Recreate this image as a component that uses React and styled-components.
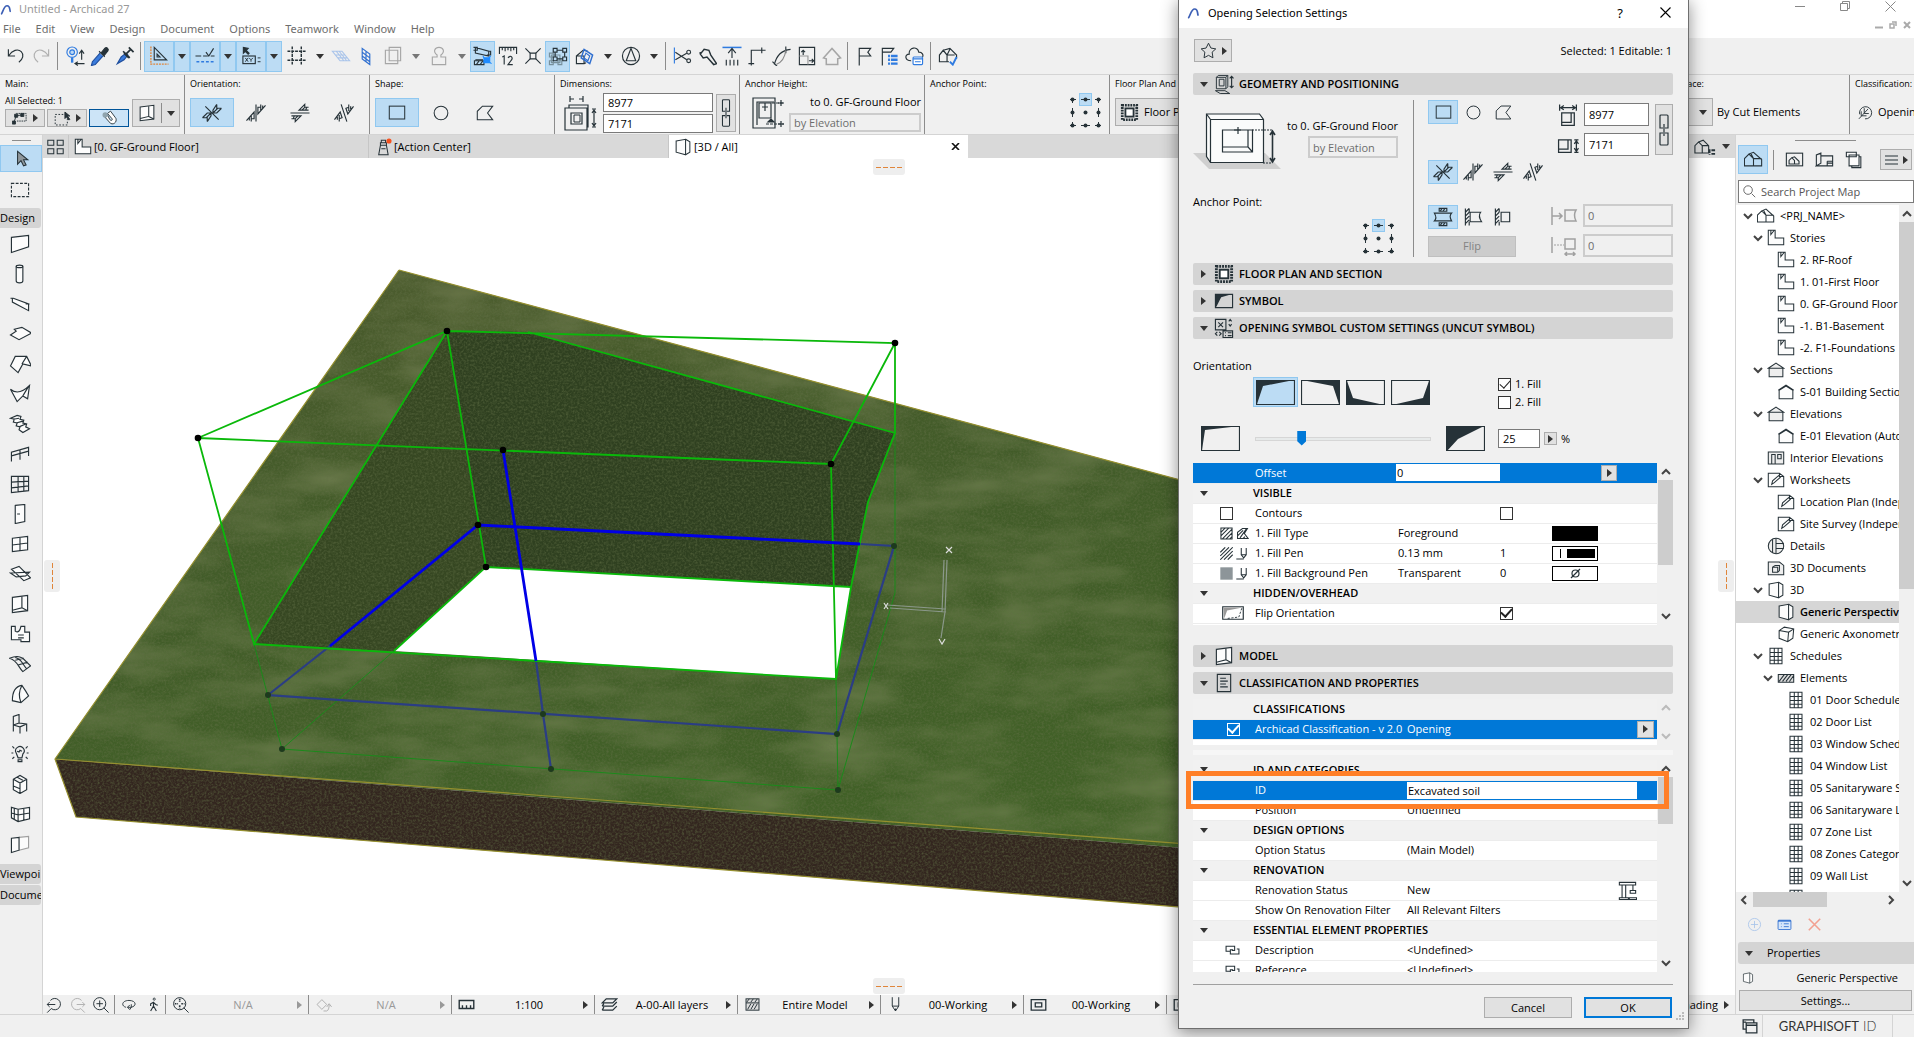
import React from 'react'
import styled, { createGlobalStyle, css } from 'styled-components'

const INK = '#263238'

const GlobalStyle = createGlobalStyle`
  * { box-sizing: border-box; }
  body {
    margin: 0;
    font-family: "Open Sans", "Noto Sans", sans-serif;
    font-size: 11px;
    line-height: 16px;
    color: #000;
    overflow: hidden;
  }
  button, input {
    font: inherit;
    color: inherit;
    margin: 0;
    padding: 0;
    border: 0;
    border-radius: 0;
    background: none;
    outline: 0;
  }
  button { white-space: nowrap; }
`

/* ---------- icons ---------- */

const Svg = styled.svg`
  display: block;
  flex: none;
  fill: none;
  stroke: ${p => p.$color || INK};
  stroke-width: 1.2;
`

const ICONS = {
  logo: <path d="M2 17C5 12 6 4 11 4s4 6 5 9" stroke="#3c5fb5" strokeWidth="2.6" strokeLinecap="round" />,
  undo: <path d="M2 3v7h7M2.500 9.500C6 4 12 2 15.500 5.500c3 3 2 8-2.500 11" />,
  redo: <path d="M18 3v7h-7M17.500 9.500C14 4 8 2 4.500 5.500c-3 3-2 8 2.500 11" />,
  find: <><circle cx="7" cy="6" r="5.500" stroke="#2f7be0" /><circle cx="7" cy="6" r="2.500" fill="#bcd8f4" stroke="#2f7be0" /><path d="M7 12v5" stroke="#2f7be0" strokeWidth="2.500" /><path d="M17 14V5m-2.500 2.500L17 4l2.500 3.500M20 18h-9m2-2-3 2 3 2" /></>,
  picker: <><path d="M10 7 2 16l-1 4 4-1 8-9" fill="#3a7bdc" stroke="#1f4f9e" /><path d="m9 5 6 6M11 7l4-5c2-2 5 1 3 3l-4 5z" fill={INK} /></>,
  syringe: <><path d="m2 18 4-7 5-4 2 2-4 5z" fill="#3a7bdc" stroke="#1f4f9e" /><path d="m8 5 7 7M11 8l5-5m-2-2 5 5M9 7l5 5" strokeWidth="1.800" /></>,
  setsquare: <><path d="M5 1v13h13zM8 8v3h3z" /><path d="M1.500 0v18.500H20" stroke="#e0853a" strokeWidth="1.400" strokeDasharray="2 1" /></>,
  snap: <><path d="M0 10h6m2 0h5" /><path d="m11 6 3 4 5-8M16 10h4" /><path d="M1 16h18" stroke="#2f7be0" strokeWidth="1.500" strokeDasharray="3 2" /></>,
  tracker: <><path d="M2 1v6l2-2 3 3 1-1-3-3 2-2z" fill={INK} /><rect x="1.500" y="10" width="13" height="8" /><path d="m4 12 3 4m0-4-3 4m4-4 2 2v2m2-4-2 2M17 12h3m-3 4h3" strokeWidth="1" /></>,
  grid: <path d="M5 0v20M14.500 0v20M0 5h20M0 14.500h20" strokeDasharray="3 1" strokeWidth="1.500" />,
  planeH: <path d="M1 5h10l8 10H9zM4 9h10M7 12h10M5 5l8 10M8 5l8 10" stroke="#a9c4ea" />,
  planeV: <path d="m6 2 8 6v11l-8-6zM10 5v11M6 6l8 6M6 10l8 6" stroke="#2f6fd0" />,
  trace: <path d="M6 1h12v14H6zM15 15v3H2V4h4M6 4h9v11" stroke="#a6a6a6" />,
  stamp: <path d="M8 9C3 5 6 1 10 1s7 4 2 8v2h5v8H3v-8h5z" stroke="#a6a6a6" />,
  suspend: <><path d="M2 1v6l14 3V5zM0 1h4v3H0M14 5h4v4h-4M2 14h8" /><path d="M1 15h10v4H1zM3 19l3-4m1 4 3-4" /><path d="M11 12h6v5h-6z" fill="#1f8bff" stroke="#1f8bff" /><path d="m18 10-2 2m3 6-3-2m-6-6 1 2" stroke="#1f8bff" /></>,
  ruler: <path d="M1 8V1h18v7M4 1v3m3-3v4m3-4v3m3-3v4m3-4v3M4 11l2-1v9M10 12c3-4 6 0 3 3l-3 4h5" />,
  cross: <><path d="m2 2 5 5m6 6 5 5m0-16-5 5m-6 6-5 5" /><path d="m7 7h6v6H7z" /></>,
  groups: <><path d="M3 9h9v8H3zM1 15h4v4H1zM1 7h4v4H1zM10 15h4v4h-4z" stroke="#78909c" /><path d="M7 4h10v9H7z" /><path d="M5 2h4v4H5zM15 2h4v4h-4zM15 11h4v4h-4zM5 11h4v4H5z" fill="#bcdcf4" /></>,
  cutaway: <><path d="M1 10 8 4l5 1M1 10v8h8v-8zM9 18l2-1" /><path d="m9 3 9 6-3 9-9-6z" stroke="#2f6fd0" strokeWidth="1.500" /><path d="m11 7 4 3-2 5-4-3z" stroke="#2f6fd0" /></>,
  explore: <><circle cx="10" cy="10" r="9" /><path d="m10 2 5 13H5z" /></>,
  scissors: <><path d="M2 1v17" stroke="#2f7be0" /><path d="m3 6 12 8M3 14l12-7" /><circle cx="17" cy="6" r="2" /><circle cx="17" cy="15" r="2" /></>,
  axe: <path d="m3 8 4-5 5 1 2 5 6 9-3 1-7-8-4 1zM5 6l-3 1" strokeWidth="1.500" />,
  adjust: <><path d="M0 1h20" stroke="#2f7be0" strokeWidth="1.600" /><path d="M10 12V3m-4 4 4-5 4 5M4 20v-6m4 6v-6m4 6v-6m4 6v-6" /></>,
  corner: <path d="M4 20V4h15M1 18h6M15 1v6" />,
  arc: <><path d="M2 19C4 10 9 4 19 3M14 0v7M0 16l5 5" /><path d="M4 19C9 17 13 12 14 4" stroke="#888" /></>,
  resize: <><path d="M2 1h16v18H2z" /><path d="M2 10h9v9" stroke="#999" /><path d="M6 9V4M4 6l2-2 2 2M12 15h5m-2-2 2 2-2 2" /></>,
  house: <path d="M1 12 10 2l9 10-3 1v6H4v-6z" stroke="#a6a6a6" strokeWidth="1.600" />,
  flag: <path d="M5 20V2h12l-3 4 3 4H5" />,
  flagList: <><path d="M3 20V2h12l-3 4H3" /><path d="M9 10h10M9 14h10M9 18h10" stroke="#2f7be0" strokeWidth="2.600" strokeDasharray="2 1 9 1" /></>,
  cloud: <><path d="M7 15c-7 0-7-7-2-7C4 1 14-1 15 6c4 0 5 3 4 5" /><rect x="9" y="11" width="10" height="8" rx="1" stroke="#2f7be0" fill="#fff" /><path d="M9 13h10M11 16h6" stroke="#2f7be0" /></>,
  houseCheck: <><path d="M1 9v7h8V9L5 4zM5 4l7-2 7 7v4M9 9l3-6M9 9h8M9 16h2" /><path d="m12 16 3 3 4-8" stroke="#2f7be0" strokeWidth="2" /></>,
  // info box
  nodes: <><path d="M2 16 5 7l8-1" /><path d="M5 4h13v10H6" strokeDasharray="2 1" /><path d="M0 14h4v4H0zM3 5h4v4H3zM11 4h4v4h-4z" fill={INK} /></>,
  marqueeArrow: <><path d="M1 5h15v13H1z" strokeDasharray="2 2" /><path d="M13 2v8l2-2 3 4 1-1-3-4h3z" fill={INK} /></>,
  magnet: <><path d="m3 7 9 10c5 3 10-4 6-8L12 1l-4 3 6 7c1 2-1 3-3 1L7 4z" fill="#fff" /><circle cx="5" cy="6" r="3.500" fill="#90a4ae" stroke="none" /></>,
  opening: <><path d="M2 3 18 1v16L2 19z" fill="#fcfcfc" /><path d="M12 2v12L2 16.500M12 14l6 3" /></>,
  ori1: <path d="m3 3 14 14M0 15l5-5h4v3l-4 6M0 15h4l5-5M5 19v-5M20 5l-5 5h-4V7l4-6M20 5h-4l-5 5M15 1v5" />,
  ori2: <path d="M10 1v18M0 18l8-9v7h-3v3M3 15v3m2-5v3M20 2l-8 9V4h3V1M17 5V2m-2 5V4" />,
  ori3: <path d="M0 10h20M1 13h10l-6 6v-3H1M4 13l-1 3m5-3-3 3M19 7H9l6-6v3h4M16 7l1-3m-5 3 3-3" />,
  ori4: <path d="m7 1 6 18M0 17l6-8 2 6-3 1v3M3 14v3m2-5v4M20 3l-6 8-2-6 3-1V1M17 6V3m-2 5V4" />,
  rect: <rect x="1" y="2" width="18" height="15" />,
  circle: <circle cx="10" cy="10" r="8" />,
  poly: <path d="M1 18V8l6-6h12l-6 8 6 8z" />,
  dims: <><path d="M1 13h22v22H1zM5 13v-3h19v22h-1M7 18h11v11H7z" /><path d="M10 20h6v7h-6z" strokeWidth="1" /><path d="M6 1v6m13-6v6M6 4h4m5 0h4M28 14h4m-4 18h4M30 16v14m-2-12 2-3 2 3m-4 10 2 3 2-3" /></>,
  chain: <path d="M5 15H2V3q0-1 1-1h6q1 0 1 1v12H7M6 11v12M5 20H2v11q0 1 1 1h6q1 0 1-1V20H7" />,
  anchorH: <><path d="M1 1h22v30H1zM5 28V5h17" /><path d="M7 6h12v15H7zM13 6v8m-3-4h6" /><path d="M20 6h12M14 27h18" strokeDasharray="3 1" /><path d="m16 25 3-3 3 3z" fill={INK} /><path d="M29 3v6m-3-3h6M29 24v6m-3-3h6" /></>,
  frame: <><path d="M2 2h16v16H2z" stroke={INK} strokeWidth="3" strokeDasharray="2 1" /><rect x="5.500" y="5.500" width="9" height="9" strokeWidth="2" fill="#fff" /></>,
  class: <path d="M10 19a8 8 0 1 0-7-6M2 19 14 6M9 5v7h6M5 9v6h7" />,
  // tool box
  arrow: <path d="M6 1v15l4-4 3 6 3-1-3-6h5z" fill="#90979b" />,
  marquee: <path d="M1 3h18v14H1z" strokeDasharray="3 1.500" />,
  wall: <path d="M1 3 19 1v12L1 19z" fill="#fcfcfc" />,
  column: <><path d="M6 2v15c0 3 7 3 7 0V2" fill="#fcfcfc" /><ellipse cx="9.500" cy="2" rx="3.500" ry="1.300" /></>,
  beam: <path d="M0 4h3l16 6v7L2 8V4m14 6h4" fill="#fcfcfc" />,
  slab: <path d="m0 11 6-4-2-2 8-2 10 6-13 7z" fill="#fcfcfc" />,
  roof: <path d="M0 12 5 2h12l5 10-9-2-5 9zM17 2l-5 8" fill="#fcfcfc" />,
  shell: <path d="M0 5c7 6 14 2 20-4l-2 14-5-3-6 6zM19 2l-6 10" fill="#fcfcfc" />,
  stair: <path d="m0 4 7-3 4 1-1 3 4 1-1 3 4 1-1 3 4 2-7 4-4-3 1-3-4-1 1-3-4-1 1-3zM3 5l6-1M6 9l7-2M9 13l7-3" fill="#fcfcfc" />,
  railing: <path d="M1 18V8l18-5v9M10 5v11M1 12l18-5" />,
  curtain: <path d="M1 2h18v15L1 19zM8 2v17M14 2v16M1 8l18-1M1 14l18-2" />,
  door: <path d="M5 1 15 0v18l-10 2zM7 10h3" fill="#fcfcfc" />,
  window: <path d="M2 4 18 2v14L2 18zM10 3v14M2 11l16-2" fill="#fcfcfc" />,
  skylight: <path d="m1 5 8-3 12 12-7 3zM0 9l20-1-4 4-10 1z" fill="#fcfcfc" />,
  zone: <path d="M1 2h4v5c3 2 5 0 6-5h4v6h5v10H11v-2H1zM8 11h6m-6 3h6" fill="#fcfcfc" />,
  mesh: <path d="M-1 4c7-3 10-2 14 0l8 8-8 6C8 13 7 6-1 4zM5 6l9-2M8 11l10-3M5 3c7 2 6 5 12 12" />,
  morph: <path d="M2 17C2 8 5 2 12 1l4 6 3 5-8 7zM12 1C8 8 9 14 11 19" fill="#fcfcfc" />,
  chair: <path d="M3 18V2l6-2v9l8 1v8M3 11l7 2v7M10 13l7-3M3 11l6-2" />,
  lamp: <path d="M6 9a4.500 4.500 0 1 1 7 1l-1 4H8zM8 16h4v2H8zM7 7l2 1 1-2 2 1M1 9h2m14 0h2M2 2l2 2m14-2-2 2M2 15l2-2m14 2-2-2" />,
  object: <path d="m3 5 7-4 7 4v11l-7 4-7-4zM3 5l7 4 7-4M10 9v11M3 12l7 3M7 3l6 3" fill="#fcfcfc" />,
  cwall: <path d="M1 3 8 5l12-2v12L8 18l-7-4zM8 5v13M14 4v13M1 9l7 2 12-2M4 4v12" fill="#fcfcfc" />,
  panel: <><path d="M9 3 19 2v12L9 16.500" fill="#fcfcfc" stroke="#a0a0a0" /><path d="M1 4 9 3v13.500L1 19z" fill="#fcfcfc" /></>,
  // tabs and navigator
  tabs: <path d="M1 2h7v6H1zM12 2h7v6h-7zM1 12h7v6H1zM12 12h7v6h-7z" />,
  story: <path d="M1 1h8v9h10v8H1zM4 1v5l4-5" fill="#fcfcfc" />,
  lighthouse: <><path d="M7 8h7l2 11H5zM7 5h7v3H7zM8 5V2h5v3M8 12h5" /><circle cx="17" cy="3" r="3" fill="#f4511e" stroke="none" /></>,
  persp: <path d="M2 3 13 1v18L2 16zM13 1l5 3v12l-5 3" fill="#fcfcfc" />,
  axo: <path d="m2 6 6-4 11 2-1 11-6 4-10-4zM2 6l11 2-1 11M13 8l6-4" fill="#fcfcfc" />,
  project: <path d="M0 9v8h10V9L5 4zM5 4l5-2 9 8v7h-9M10 9h9M10 9 7 3" />,
  viewmap: <><rect x="1" y="3" width="18" height="14" /><path d="M4 11v4h6v-4L7 8zM7 8l3-1 5 5v3h-5" /></>,
  layout: <path d="M1 17V5l5-2v11l-5 3h18V6H6M13 12h6m-6 5v-5m0 2h6" />,
  publisher: <path d="M4 5h11v12H4zM1 2h11v5H1zM15 7h2v12H7v-2" fill="#fcfcfc" />,
  section: <path d="M2 8h16v10H2zM1 8l9-6 9 6z" fill="#eee" />,
  elevation: <path d="M2 8l8-5 8 5v10H2zM1 8l9-6 9 6" fill="#fcfcfc" />,
  interior: <path d="M1 3h18v14H1zM5 17V6h4v11M12 6h4v5h-4z" fill="#eee" />,
  worksheet: <path d="M1 2h13l5 4v12H1zM14 2v4h5M5 15l1-4 7-6 2 2-7 6z" fill="#fcfcfc" />,
  detail: <><circle cx="10" cy="10" r="9" fill="#eee" /><path d="M6 2v16M10 1v18M10 7h9M10 13h9" /></>,
  doc3d: <path d="M1 3h13l5 4v11H1zM6 9l3-2h5v6l-2 2H6zM6 9h6v6" fill="#eee" />,
  schedule: <path d="M3 1h14v18H3zM3 6h14M3 10.500h14M3 15h14M8 1v18M12.500 1v18" fill="#fff" />,
  hatch: <path d="M1 6h18v9H1zM2 14l6-8M6 14l6-8M10 14l6-8M14 14l5-7" fill="#ddd" />,
  houseTree: <><path d="M1 9v8h8V9L5 5zM5 5l5-2 6 6v8H9M9 9h7" /><path d="M17 13v6m2-5h4m-4 4h4" strokeWidth="2" strokeDasharray="4 1" /></>,
  search: <><circle cx="8" cy="8" r="6" /><path d="m13 13 5 5" /></>,
  plus: <><circle cx="10" cy="10" r="8.500" stroke="#a9c4ea" /><path d="M10 5v10M5 10h10" stroke="#a9c4ea" /></>,
  settings: <><rect x="1" y="4" width="18" height="13" rx="1" stroke="#2f6fd0" fill="#d6e6fa" /><path d="M1 5h18" stroke="#2f6fd0" strokeWidth="2" /><path d="M5 9h1m3 0h7M5 13h1m3 0h7" stroke="#2f6fd0" /></>,
  del: <path d="m2 2 16 16M18 2 2 18" stroke="#f2a191" strokeWidth="2.200" />,
  windows: <path d="M5 14H1V2h14v3M5 6h14v13H5zM5 9h14M1 5h4" strokeWidth="1.700" />,
  // quick options
  back: <path d="M5 5a7 7 0 1 1 1 10l-5 5M1 10h10M4 7l-3 3 3 3" />,
  forward: <path d="M15 5a7 7 0 1 0-1 10l5 5M19 10H9m7-3 3 3-3 3" />,
  zoomIn: <><circle cx="9" cy="9" r="7.500" /><path d="M9 5v8M5 9h8m1 5 6 6" /></>,
  orbit: <path d="M6 13C-1 11 1 4 10 4s11 7 3 9H8m3-3-3 3 3 3M13 9v4l-2 3" />,
  walk: <><circle cx="11" cy="2.500" r="1.500" /><path d="M10 6v6l4 7M10 12l-4 7M10 7 6 9v3M10 7l3 3 3 1" strokeWidth="1.600" /></>,
  fit: <><circle cx="9" cy="9" r="7.500" /><path d="M9 3v4m0 4v4M3 9h4m4 0h4" strokeWidth="2" strokeDasharray="2 1" /><path d="m14 14 6 6" /></>,
  rotate: <path d="m2 10 6-6 6 6-6 6zM10 18h4q3-1 3-8m-3 3 3-4 3 4" />,
  scale: <path d="M1 5h18v10H1zM5 15v-4m5 4v-4m5 4v-4" strokeWidth="1.700" />,
  layers: <path d="m1 8 5-5h13l-5 5zM1 12h13l5-5M1 12l2-3M1 17h13l5-5M1 17l2-4" strokeWidth="1.600" />,
  model: <><rect x="2" y="3" width="16" height="14" fill="#ddd" /><path d="M2 8h16M4 16l4-7m0 7 4-7m0 7 4-7M3 7l3-4m2 4 3-4m2 4 3-4" /></>,
  pen: <path d="M6 1v11l4 6 4-6V1M6 12h8M10 15v3" />,
  override: <path d="M1 4h18v13H1zM6 8h8v5H6z" strokeWidth="1.600" />,
  // dialog
  star: <path d="m10 1 3 6 6 1-4.500 4 1 7L10 16l-5.500 3 1-7L1 8l6-1z" />,
  geometry: <><path d="M2 3 4 1h10v12l-2 2H2zM2 3h10v12M5 5h5v7H5zM12 3l2-2M1 17h10l5 3H6z" strokeWidth="1" /><path d="M18 2v12m-2-10 2-2 2 2m-4 8 2 2 2-2" /></>,
  symbol: <><path d="M1 3h18v14H1z" fill="#d4d4d4" /><path d="M1 3h17L7 6 2 16H1z" fill={INK} stroke="none" /></>,
  custom: <path d="M1 1h11v11H1zM4 4l5 5m0-5L4 9M15 3l1.500-2L18 3m-3 3 1.500 2L18 6M9 13h10v7H9zM11 15h1m2 0h4m-7 3h1m2 0h4M3 14l-2 2 2 2m2-4 2 2-2 2" />,
  doc: <path d="M3 1h14v18H3zM6 5h6M6 8h8M6 11h6M6 14h8" />,
  pos1: <path d="M1 6h18q-3 3 0 8H1q3-3 0-8zM6 4V1h8v3zM6 16v3h8v-3zM7 4l2-3m1 3 2-3m-5 18 2-3m1 3 2-3" />,
  pos2: <path d="M2 1v18M6 1v4M6 15v4M2 5l4-4M2 9l4-4M2 13l4-4M2 17l4-4M7 5h11q-3 4 1 10H7z" />,
  pos3: <path d="M2 1v18M6 1v4M6 15v4M2 5l4-4M2 9l4-4M2 13l4-4M2 17l4-4M8 5h9v10H8z" />,
  dimA: <path d="M4 8h12v12H4zM4 17h9V8M3 3h14M6 1 3 3l3 2M14 1l3 2-3 2M2 0v6m16-6v6" />,
  dimB: <path d="M1 5h12v12H1zM1 14h9V5M16 5h4m-4 12h4M18 7v8m-2-6 2-3 2 3m-4 4 2 3 2-3" />,
  offA: <path d="M1 1v18M1 10h10M8 7l3 3-3 3M14 4h11q-3 5 0 11H14z" strokeWidth="1.500" />,
  offB: <><path d="M1 1v16M14 3h10v10H14zM14 18h10m-8-2-2 2 2 2m6-4 2 2-2 2" strokeWidth="1.500" /><path d="M3 9h10" strokeDasharray="2 1" /></>,
  hatchBox: <path d="M1 1h18v18H1zM1 8l7-7M1 14 14 1M3 19 19 3M9 19 19 9M15 19l4-4" strokeWidth="1.700" />,
  hatchLines: <path d="M0 8l8-8M0 14 14 0M0 20 20 0M6 20 20 6M12 20l8-8" strokeWidth="1.700" />,
  hatchShape: <path d="M2 18V8l8-6h8l-5 8 6 8zM2 14l9-9M6 17 16 3M11 18l3-3" strokeWidth="1.700" />,
  penTip: <path d="M8 1v11l4 5 4-5V1M8 12h8M0 19h12" strokeWidth="1.700" />,
  solid: <path d="M0 0h20v20H0z" fill="#8d9599" stroke="none" />,
  flipShape: <><path d="M1 1h28v17H1z" fill="#fff" strokeWidth="1.600" /><path d="M2 2h26L7 6 3 17z" fill="#999" stroke="none" /><path d="M27 3l-4 12-16 2" strokeDasharray="3 2" /></>,
  link: <path d="M7 11H1V4h12v6H9M11 9H7v6h12V8h-3" strokeWidth="1.500" />,
  crane: <path d="M1 1h18v3H1zM4 4v14M8 4v14M1 18h10v2H1zM16 4v6M13 10h6v3h-6zM12 18h8v2h-8z" />,
}

const Icon = ({ n, w = 18, h, box, color }) => (
  <Svg width={w} height={h || w} viewBox={box || '-0.5 -0.5 21 21'} $color={color} aria-hidden="true">
    {ICONS[n]}
  </Svg>
)

const Caret = styled.span`
  flex: none;
  width: 0;
  height: 0;
  border-style: solid;
  border-color: transparent;
  ${p => p.$right
    ? css`border-width: 4px 0 4px 5px; border-left-color: ${p.$c || '#333'};`
    : css`border-width: 5px 4px 0; border-top-color: ${p.$c || '#333'};`}
`

const Chevron = ({ dir = 'down', color = '#444' }) => {
  const turn = { down: 0, up: 180, left: 90, right: -90 }[dir]
  return (
    <Svg width="10" height="10" viewBox="0 0 10 10" $color={color}>
      <path d="M1 3l4 4 4-4" strokeWidth="2" transform={`rotate(${turn} 5 5)`} />
    </Svg>
  )
}

/* ---------- window frame ---------- */

const Window = styled.div`
  position: relative;
  height: 100vh;
  display: flex;
  flex-direction: column;
  background: #f0f0f0;
  overflow: hidden;
`

const Top = styled.header`
  display: flex;
  justify-content: space-between;
  height: 38px;
  flex: none;
  background: #fff;
  font-family: "Noto Sans", "Open Sans", sans-serif;
`

const Title = styled.div`
  display: flex;
  align-items: center;
  gap: 6px;
  height: 18px;
  color: #999;
`

const Menu = styled.nav`
  display: flex;
  align-items: center;
  gap: 15px;
  height: 22px;
  padding-left: 3px;
  button { color: #6d6d6d; line-height: 20px; }
`

const WinButtons = styled.div`
  display: flex;
  flex-direction: column;
  align-items: flex-end;
`

const WinRow = styled.div`
  display: flex;
  align-items: center;
  justify-content: flex-end;
  gap: ${p => p.$gap}px;
  height: ${p => p.$h}px;
  padding-right: ${p => p.$pad}px;
`

const Toolbar = styled.div`
  display: flex;
  align-items: center;
  flex: none;
  height: 37px;
  padding: 0 3px;
  border-bottom: 1px solid #d4d4d4;
`

const Tool = styled.button`
  display: flex;
  align-items: center;
  justify-content: center;
  flex: none;
  width: ${p => p.$w || 25}px;
  height: ${p => p.$h || 31}px;
  ${p => p.$on && css`background: #bcdcf4; box-shadow: inset 0 0 0 1px #90c8f0;`}
`

const Sep = styled.span`
  flex: none;
  width: 1px;
  height: ${p => p.$h || 28}px;
  margin: 0 ${p => (p.$m === undefined ? 4 : p.$m)}px;
  background: #8c8c8c;
`

/* ---------- info box ---------- */

const InfoBox = styled.div`
  display: flex;
  flex: none;
  height: 60px;
  border-bottom: 1px solid #d4d4d4;
  overflow: hidden;
`

const Cell = styled.section`
  display: flex;
  flex-direction: column;
  flex: none;
  width: 185px;
  height: 59px;
  padding: 2px 4px 0 5px;
  border-right: 1px solid #8c8c8c;
  white-space: nowrap;
`

const CellLabel = styled.div`
  font-size: 9px;
  line-height: 13px;
`

const Row = styled.div`
  display: flex;
  align-items: ${p => p.$align || 'center'};
  justify-content: ${p => p.$justify || 'flex-start'};
  gap: ${p => p.$gap || 0}px;
  padding: ${p => p.$pad || 0};
`

const Stack = styled.div`
  display: flex;
  flex-direction: column;
  align-items: ${p => p.$align || 'stretch'};
  gap: ${p => p.$gap || 0}px;
  padding: ${p => p.$pad || 0};
`

const Flat = styled.button`
  display: flex;
  align-items: center;
  justify-content: center;
  gap: ${p => p.$gap || 5}px;
  flex: none;
  width: ${p => p.$w}px;
  height: ${p => p.$h}px;
  border: 1px solid ${p => (p.$on ? '#005499' : '#adadad')};
  background: ${p => (p.$on ? '#cce4f7' : '#e1e1e1')};
  ${p => p.$start && css`justify-content: flex-start; padding-left: 4px;`}
  &:disabled { border-color: #bfbfbf; background: #ccc; color: #838383; }
`

const Field = styled.input`
  flex: none;
  width: ${p => p.$w}px;
  height: ${p => p.$h || 19}px;
  padding: 0 4px;
  border: 1px solid #7a7a7a;
  background: #fff;
  &:disabled { border: 2px solid #ccc; background: #f0f0f0; color: #6d6d6d; padding: 0 3px; }
`

const Pins = styled.div`
  display: grid;
  grid-template-columns: repeat(3, 13px);
  grid-auto-rows: 13px;
  button { display: grid; place-items: center; }
  button:nth-child(2) { background: #bcdcf4; box-shadow: inset 0 0 0 1px #90c8f0; }
`

const PIN_PATHS = [
  'M4 6.500h6M6.500 5v5', 'M2 6.500h9', 'M3 6.500h6M6.500 5v5',
  'M6.500 2v9', '', 'M6.500 2v9',
  'M4 6.500h6M6.500 3v5', 'M2 6.500h9', 'M3 6.500h6M6.500 3v5',
]

const AnchorPins = () => (
  <Pins>
    {PIN_PATHS.map((d, i) => (
      <button key={i} aria-label={`Anchor ${i + 1}`}>
        <Svg width="13" height="13" viewBox="0 0 13 13"><path d={d} strokeWidth="1" /><circle cx="6.500" cy="6.500" r="2" fill={INK} stroke="none" /></Svg>
      </button>
    ))}
  </Pins>
)

const Picks = ({ names, w = 44, h = 29, size = 20 }) => (
  <Row>
    {names.map((n, i) => (
      <Tool key={n} $w={w} $h={h} $on={i === 0} aria-label={n}><Icon n={n} w={size} /></Tool>
    ))}
  </Row>
)

const ORIENTATIONS = ['ori1', 'ori2', 'ori3', 'ori4']
const SHAPES = ['rect', 'circle', 'poly']

/* ---------- workspace ---------- */

const Body = styled.div`
  display: grid;
  grid-template-columns: 43px minmax(0, 1fr) 179px;
  flex: 1;
  min-height: 0;
`

const Tools = styled.aside`
  display: flex;
  flex-direction: column;
  border-right: 1px solid #d4d4d4;
  overflow: hidden;
`

const Grip = styled.span`
  flex: none;
  width: ${p => p.$w}px;
  height: 1px;
  margin: 5px auto 4px;
  background: #8c8c8c;
`

const ToolHead = styled.button`
  flex: none;
  height: 20px;
  margin-bottom: 1px;
  margin-right: 1px;
  border-radius: 0 3px 3px 0;
  background: #d4d4d4;
  text-align: left;
  overflow: hidden;
`

const Centre = styled.main`
  display: flex;
  flex-direction: column;
  min-width: 0;
`

const Tabs = styled.div`
  display: flex;
  flex: none;
  height: 23px;
  background: #d9d9d9;
`

const Tab = styled.button`
  display: flex;
  align-items: center;
  gap: 2px;
  flex: none;
  width: 300px;
  padding: 0 5px;
  border-left: 1px solid #c6c6c6;
  background: ${p => (p.$on ? '#fff' : 'none')};
  text-align: left;
  span { flex: 1; }
`

const Canvas = styled.div`
  position: relative;
  flex: 1;
  min-height: 0;
  background: #fff;
  overflow: hidden;
  > svg { display: block; width: 100%; height: 100%; }
`

const Handle = styled.span`
  position: absolute;
  display: grid;
  place-items: center;
  background: #eee;
  border-radius: 3px;
  width: ${p => (p.$v ? 16 : 32)}px;
  height: ${p => (p.$v ? 32 : 16)}px;
  ${p => p.$at}
`

const HandleMark = ({ v }) => (
  <Svg width={v ? 1 : 26} height={v ? 26 : 1} $color="#e0853a">
    <path d={v ? 'M.5 0v26' : 'M0 .5h26'} strokeDasharray="5 2" />
  </Svg>
)

const Quick = styled.div`
  display: flex;
  align-items: center;
  flex: none;
  height: 19px;
  overflow: hidden;
`

const Option = styled.button`
  display: flex;
  align-items: center;
  flex: none;
  width: 143px;
  height: 19px;
  padding: 0 6px;
  border-left: 1px solid #8c8c8c;
  color: ${p => (p.$off ? '#999' : '#000')};
  span:first-of-type { flex: 1; padding: 0 6px; text-align: ${p => (p.$end ? 'right' : 'center')}; }
`

const Status = styled.footer`
  display: flex;
  justify-content: flex-end;
  align-items: center;
  flex: none;
  height: 23px;
  border-top: 1px solid #d4d4d4;
`

const Brand = styled.div`
  display: flex;
  align-items: center;
  justify-content: center;
  gap: 4px;
  width: 131px;
  height: 22px;
  margin-left: 4px;
  margin-right: 21px;
  border: solid #d4d4d4;
  border-width: 0 1px;
  font-family: Lato, sans-serif;
  font-size: 13px;
  color: #333;
  span { font-weight: 300; }
`

/* ---------- navigator ---------- */

const Navigator = styled.aside`
  display: flex;
  flex-direction: column;
  min-height: 0;
  border-left: 1px solid #d4d4d4;
`

const Search = styled.label`
  display: flex;
  align-items: center;
  gap: 4px;
  height: 23px;
  margin: 6px 0 2px 2px;
  padding-left: 3px;
  border: 1px solid #7a7a7a;
  background: #fff;
  input { min-width: 0; flex: 1; }
  input::placeholder { color: #555; opacity: 1; }
`

const TreeWrap = styled.div`
  display: flex;
  flex: 1;
  min-height: 0;
`

const Tree = styled.ul`
  flex: 1;
  min-width: 0;
  margin: 0;
  padding: 0;
  list-style: none;
  background: #fff;
  overflow: hidden;
`

const Node = styled.li`
  display: flex;
  align-items: center;
  height: 22px;
  padding-left: ${p => p.$depth * 10 + 7}px;
  background: ${p => (p.$on ? '#d6d6d6' : 'none')};
  font-weight: ${p => (p.$on ? 600 : 400)};
  white-space: nowrap;
  > i { flex: none; width: 14px; }
  > span { margin-left: 5px; }
`

const ScrollBar = styled.div`
  display: flex;
  flex-direction: column;
  align-items: center;
  flex: none;
  width: 15px;
  padding: 4px 0;
  background: #f0f0f0;
  div { width: 15px; height: ${p => p.$thumb}px; margin: 3px 0 auto; background: #cdcdcd; }
`

const HScroll = styled.div`
  display: flex;
  align-items: center;
  gap: 4px;
  height: 15px;
  padding: 0 18px 0 3px;
  div { width: 74px; height: 15px; margin-right: auto; background: #cdcdcd; }
`

const NavHead = styled.button`
  display: flex;
  align-items: center;
  gap: 14px;
  flex: none;
  height: 22px;
  margin-left: 2px;
  padding-left: 7px;
  border-radius: 3px 0 0 3px;
  background: #d4d4d4;
`

const WideButton = styled.button`
  flex: 1;
  height: 21px;
  border: 1px solid #adadad;
  background: #e1e1e1;
`

const NODES = [
  [0, 'project', '<PRJ_NAME>', 1], [1, 'story', 'Stories', 1],
  [2, 'story', '2. RF-Roof'], [2, 'story', '1. 01-First Floor'], [2, 'story', '0. GF-Ground Floor'],
  [2, 'story', '-1. B1-Basement'], [2, 'story', '-2. F1-Foundations'],
  [1, 'section', 'Sections', 1], [2, 'elevation', 'S-01 Building Section'],
  [1, 'section', 'Elevations', 1], [2, 'elevation', 'E-01 Elevation (Auto-r'],
  [1, 'interior', 'Interior Elevations'], [1, 'worksheet', 'Worksheets', 1],
  [2, 'worksheet', 'Location Plan (Indep'], [2, 'worksheet', 'Site Survey (Independ'],
  [1, 'detail', 'Details'], [1, 'doc3d', '3D Documents'], [1, 'persp', '3D', 1],
  [2, 'persp', 'Generic Perspective', 0, 1], [2, 'axo', 'Generic Axonometry'],
  [1, 'schedule', 'Schedules', 1], [2, 'hatch', 'Elements', 1],
  [3, 'schedule', '01 Door Schedule'], [3, 'schedule', '02 Door List'], [3, 'schedule', '03 Window Schedule'],
  [3, 'schedule', '04 Window List'], [3, 'schedule', '05 Sanitaryware S'], [3, 'schedule', '06 Sanitaryware Li'],
  [3, 'schedule', '07 Zone List'], [3, 'schedule', '08 Zones Category'], [3, 'schedule', '09 Wall List'],
  [3, 'schedule', ''],
]

/* ---------- dialog ---------- */

const Dialog = styled.div`
  position: absolute;
  top: -1px;
  right: 225px;
  width: 511px;
  padding-bottom: 10px;
  border: 1px solid #6f6f6f;
  background: #f0f0f0;
  box-shadow: 0 3px 16px rgba(0, 0, 0, 0.45);
`

const DialogTitle = styled.div`
  display: flex;
  align-items: center;
  height: 28px;
  padding: 0 13px 3px 8px;
  gap: 7px;
  background: #fff;
  font-family: "Noto Sans", "Open Sans", sans-serif;
  button { width: 20px; display: grid; place-items: center; font-size: 13px; }
`

const DialogBody = styled.div`
  padding: 11px 15px 0 14px;
`

const Grow = styled.span`
  flex: 1;
`

const PanelHead = styled.button`
  display: flex;
  align-items: center;
  width: 100%;
  height: 22px;
  margin-bottom: 5px;
  padding-left: 6px;
  border-radius: 2px;
  background: #d4d4d4;
  > i { display: flex; justify-content: center; width: 9px; margin-right: 6px; }
  > b { margin-left: 5px; font-weight: 600; }
`

const Geometry = styled.div`
  display: flex;
  height: 157px;
  margin-bottom: 6px;
`

const GeoLeft = styled.div`
  display: flex;
  flex-direction: column;
  width: 221px;
  padding-right: 15px;
  border-right: 1px solid #8c8c8c;
`

const GeoRight = styled.div`
  display: flex;
  flex-direction: column;
  flex: 1;
  padding-left: 14px;
`

const Line = styled.hr`
  width: 100%;
  height: 1px;
  margin: ${p => p.$m || 0};
  border: 0;
  background: #a0a0a0;
`

const Check = styled.input`
  appearance: none;
  display: grid;
  place-content: center;
  flex: none;
  width: 13px;
  height: 13px;
  border: 1px solid ${p => (p.$white ? '#fff' : '#333')};
  background: ${p => (p.$white ? 'none' : '#fff')};
  &:checked::after {
    content: "";
    width: 9px;
    height: 5px;
    margin-bottom: 3px;
    border: solid ${p => (p.$white ? '#fff' : '#222')};
    border-width: 0 0 ${p => (p.$bold ? 2 : 1)}px ${p => (p.$bold ? 2 : 1)}px;
    transform: rotate(-48deg);
  }
`

const CheckLabel = styled.label`
  display: flex;
  align-items: center;
  gap: 4px;
  height: 18px;
`

const Checks = styled.div`
  height: 30px;
  padding-left: 65px;
  margin-top: -2px;
`

const Slider = styled.input`
  appearance: none;
  width: 176px;
  height: 15px;
  &::-webkit-slider-runnable-track {
    height: 4px;
    border: 1px solid #d6d6d6;
    background: #e7eaea;
  }
  &::-webkit-slider-thumb {
    appearance: none;
    width: 9px;
    height: 15px;
    margin-top: -7px;
    background: #0078d7;
    clip-path: polygon(0 0, 100% 0, 100% 72%, 50% 100%, 0 72%);
  }
`

const ListWrap = styled.div`
  display: flex;
  height: ${p => p.$h}px;
  overflow: hidden;
`

const ListClip = styled.div`
  flex: 1;
  margin-right: 1px;
  background: #fff;
  overflow: hidden;
`

const Splitter = styled.div`
  height: 5px;
  margin: 5px 0;
  background: #f6f6f6;
`

const Table = styled.table`
  width: 100%;
  table-layout: fixed;
  border-collapse: collapse;
  td, th { height: 20px; padding: 0; border-bottom: 1px solid #ececec; line-height: 16px; white-space: nowrap; text-align: left; font-weight: 400; }
`

const Tr = styled.tr`
  ${p => p.$head && css`background: #f1f1f1; & > th { font-weight: 600; }`}
  ${p => p.$sel && css`background: #0078d7; color: #fff;`}
`

const Lead = styled.div`
  display: flex;
  align-items: center;
  gap: 3px;
  padding-left: ${p => p.$l}px;
`

const CellInput = styled.input`
  display: block;
  width: ${p => p.$w};
  height: 17px;
  padding: 0 1px;
  background: #fff;
  color: #000;
`

const Swatch = styled.div`
  display: flex;
  align-items: center;
  justify-content: ${p => (p.$kind === 'none' ? 'center' : 'flex-end')};
  width: 46px;
  height: 15px;
  border: 1px solid #000;
  background: ${p => (p.$kind === 'fill' ? '#000' : '#fff')};
  i { width: 28px; height: 9px; margin-right: 2px; background: #000; }
  u { width: 1px; height: 9px; margin-right: 6px; background: #000; }
`

const Highlight = styled.div`
  position: absolute;
  top: 771px;
  left: 7px;
  width: 483px;
  height: 38px;
  border: 5px solid #ff7f27;
  pointer-events: none;
`

const SizeGrip = styled.span`
  position: absolute;
  right: 3px;
  bottom: 3px;
`

const DlgButton = styled.button`
  width: 88px;
  height: 21px;
  background: #e1e1e1;
  border: ${p => (p.$primary ? '2px solid #0078d7' : '1px solid #adadad')};
`

const Corner = ({ d, on }) => (
  <Svg width="39" height="25" viewBox="0 0 39 25">
    <path d="M.5.5h38v24H.5z" fill={on ? '#bcdcf4' : '#f0f0f0'} />
    <path d={d} fill={INK} stroke="none" />
  </Svg>
)

const Panel = ({ icon, open, children }) => (
  <PanelHead aria-expanded={!!open}>
    <i><Caret $right={!open} /></i>
    <Icon n={icon} w={20} />
    <b>{children}</b>
  </PanelHead>
)

const WallPicture = () => (
  <Svg width="88" height="57" viewBox="0 0 88 57">
    <path d="M0 40h72l16 16H16z" fill="#cfcfcf" stroke="none" />
    <path d="M13.500 1h53l4 5.500v43h-53l-4-6z" fill="#fafbfb" />
    <path d="M13.500 1l4 5.500h53M17.500 6.500v43" />
    <path d="M29.500 17h30v22h-30zM55 17v17l4.500 5M55 34H29.500" />
    <path d="M59 17h20M70 50h9" strokeDasharray="2 1" />
    <path d="M79.500 19v29m-2.500-26 2.500-4 2.500 4m-5 23 2.500 4 2.500-4" strokeWidth="1.600" />
    <path d="M45 14v7M41 17h7" />
  </Svg>
)

const PROPS = [
  ['head', 'ID AND CATEGORIES'], ['sel', 'ID', 'Excavated soil'], ['row', 'Position', 'Undefined'],
  ['head', 'DESIGN OPTIONS'], ['row', 'Option Status', '(Main Model)'],
  ['head', 'RENOVATION'], ['crane', 'Renovation Status', 'New'], ['row', 'Show On Renovation Filter', 'All Relevant Filters'],
  ['head', 'ESSENTIAL ELEMENT PROPERTIES'], ['link', 'Description', '<Undefined>'], ['link', 'Reference', '<Undefined>'],
]

const SettingsDialog = () => (
  <Dialog role="dialog" aria-label="Opening Selection Settings">
    <DialogTitle>
      <Icon n="logo" w={14} />
      <span>Opening Selection Settings</span>
      <Grow />
      <Row $gap={25}>
        <button aria-label="Help">?</button>
        <button aria-label="Close">
          <Svg width="11" height="11" viewBox="0 0 11 11" $color="#000"><path d="m.5.5 10 10m0-10-10 10" strokeWidth="1.100" /></Svg>
        </button>
      </Row>
    </DialogTitle>
    <DialogBody>
      <Row $justify="space-between" $pad="0 1px 11px 1px">
        <Flat $w={38} $h={23} aria-label="Favorites"><Icon n="star" w={17} /><Caret $right /></Flat>
        <span>Selected: 1 Editable: 1</span>
      </Row>
      <Panel icon="geometry" open>GEOMETRY AND POSITIONING</Panel>
      <Geometry>
        <GeoLeft>
          <Row $pad="13px 0 0" $align="flex-start" $justify="space-between">
            <WallPicture />
            <Stack $align="flex-end" $gap={2} $pad="5px 0 0">
              <span>to 0. GF-Ground Floor</span>
              <Field $w={90} $h={22} disabled defaultValue="by Elevation" aria-label="Elevation reference" />
            </Stack>
          </Row>
          <Row $pad="24px 0 9px">Anchor Point:</Row>
          <Row $justify="flex-end"><AnchorPins /></Row>
        </GeoLeft>
        <GeoRight>
          <Row $justify="space-between" $align="flex-start">
            <Stack $gap={36}>
              <Picks names={SHAPES} w={30} h={24} size={17} />
              <Picks names={ORIENTATIONS} w={30} h={24} size={20} />
            </Stack>
            <Row $gap={6} $pad="3px 0 0">
              <Stack $gap={7}>
                <Row $gap={5}><Icon n="dimA" w={22} /><Field $w={65} $h={23} defaultValue="8977" aria-label="Width" /></Row>
                <Row $gap={5}><Icon n="dimB" w={22} /><Field $w={65} $h={23} defaultValue="7171" aria-label="Height" /></Row>
              </Stack>
              <Flat $w={18} $h={51} aria-label="Keep proportions"><Icon n="chain" w={12} h={34} box="0 0 12 34" /></Flat>
            </Row>
          </Row>
          <Line $m="11px 0 9px" />
          <Row $justify="space-between">
            <Stack $gap={7}>
              <Picks names={['pos1', 'pos2', 'pos3']} w={30} h={24} size={20} />
              <Flat $w={88} $h={21} disabled>Flip</Flat>
            </Stack>
            <Stack $gap={7}>
              <Row $gap={5}><Icon n="offA" w={27} h={20} box="0 0 27 20" color="#a0a0a0" /><Field $w={90} $h={23} disabled defaultValue="0" aria-label="Start offset" /></Row>
              <Row $gap={5}><Icon n="offB" w={27} h={20} box="0 0 27 20" color="#a0a0a0" /><Field $w={90} $h={23} disabled defaultValue="0" aria-label="Depth" /></Row>
            </Stack>
          </Row>
        </GeoRight>
      </Geometry>
      <Panel icon="frame">FLOOR PLAN AND SECTION</Panel>
      <Panel icon="symbol">SYMBOL</Panel>
      <Panel icon="custom" open>OPENING SYMBOL CUSTOM SETTINGS (UNCUT SYMBOL)</Panel>

      <Row $pad="14px 0 3px">Orientation</Row>
      <Row $pad="0 0 0 60px" $align="flex-start">
        <Tool $w={45} $h={30} $on aria-label="Top left"><Corner on d="M0 0h38L7 6 1 24H0z" /></Tool>
        <Tool $w={45} $h={30} aria-label="Top right"><Corner d="M39 0H1l31 6 6 18h1z" /></Tool>
        <Tool $w={45} $h={30} aria-label="Bottom left"><Corner d="M0 25h38L7 18 1 1H0z" /></Tool>
        <Tool $w={45} $h={30} aria-label="Bottom right"><Corner d="M39 25H1l31-7 6-17h1z" /></Tool>
        <Checks>
          <CheckLabel><Check type="checkbox" defaultChecked />1. Fill</CheckLabel>
          <CheckLabel><Check type="checkbox" />2. Fill</CheckLabel>
        </Checks>
      </Row>
      <Row $pad="19px 0 12px 8px">
        <Corner d="M0 0h39L4 4 1 24H0z" />
        <Row $pad="0 15px"><Slider type="range" defaultValue="25" aria-label="Ratio" /></Row>
        <Corner d="M0 0h38L12 13 1 25H0z" />
        <Row $pad="0 0 0 13px" $gap={4}>
          <Field $w={42} defaultValue="25" aria-label="Percent" />
          <Flat $w={13} $h={13} aria-label="More"><Caret $right /></Flat>
          <span>%</span>
        </Row>
      </Row>

      <ListWrap $h={162}>
        <ListClip>
          <Table>
            <colgroup><col width="60" /><col width="143" /><col width="104" /><col width="52" /><col /></colgroup>
            <tbody>
              <Tr $sel>
                <td /><td><Lead $l={2}>Offset</Lead></td>
                <td><CellInput $w="104px" defaultValue="0" aria-label="Offset" /></td>
                <td /><td><Lead $l={49}><Flat $w={16} $h={16} aria-label="More"><Caret $right /></Flat></Lead></td>
              </Tr>
              <Tr $head><td><Lead $l={7}><Caret /></Lead></td><th colSpan={4}>VISIBLE</th></Tr>
              <Tr>
                <td><Lead $l={27}><Check type="checkbox" aria-label="Show contours" /></Lead></td>
                <td><Lead $l={2}>Contours</Lead></td><td />
                <td><Check type="checkbox" aria-label="Contours" /></td><td />
              </Tr>
              <Tr>
                <td><Lead $l={27}><Icon n="hatchBox" w={13} /><Icon n="hatchShape" w={13} /></Lead></td>
                <td><Lead $l={2}>1. Fill Type</Lead></td><td><Lead $l={2}>Foreground</Lead></td><td />
                <td><Swatch $kind="fill" /></td>
              </Tr>
              <Tr>
                <td><Lead $l={27}><Icon n="hatchLines" w={13} /><Icon n="penTip" w={13} /></Lead></td>
                <td><Lead $l={2}>1. Fill Pen</Lead></td><td><Lead $l={2}>0.13 mm</Lead></td><td>1</td>
                <td><Swatch $kind="pen"><u /><i /></Swatch></td>
              </Tr>
              <Tr>
                <td><Lead $l={27}><Icon n="solid" w={13} /><Icon n="penTip" w={13} /></Lead></td>
                <td><Lead $l={2}>1. Fill Background Pen</Lead></td><td><Lead $l={2}>Transparent</Lead></td><td>0</td>
                <td><Swatch $kind="none"><Svg width="11" height="11" viewBox="0 0 11 11"><circle cx="5.500" cy="5.500" r="3.500" /><path d="m1 10 9-9" /></Svg></Swatch></td>
              </Tr>
              <Tr $head><td><Lead $l={7}><Caret /></Lead></td><th colSpan={4}>HIDDEN/OVERHEAD</th></Tr>
              <Tr>
                <td><Lead $l={29}><Icon n="flipShape" w={22} h={14} box="0 0 30 19" /></Lead></td>
                <td><Lead $l={2}>Flip Orientation</Lead></td><td />
                <td><Check type="checkbox" defaultChecked $bold aria-label="Flip orientation" /></td><td />
              </Tr>
            </tbody>
          </Table>
        </ListClip>
        <ScrollBar $thumb={85}><Chevron dir="up" /><div /><Chevron /></ScrollBar>
      </ListWrap>

      <Row $pad="20px 0 0" />
      <Panel icon="opening">MODEL</Panel>
      <Panel icon="doc" open>CLASSIFICATION AND PROPERTIES</Panel>

      <ListWrap $h={46}>
        <ListClip>
          <Table>
            <colgroup><col width="60" /><col width="152" /><col /><col width="20" /></colgroup>
            <tbody>
              <Tr $head><td /><th colSpan={3}>CLASSIFICATIONS</th></Tr>
              <Tr $sel>
                <td><Lead $l={34}><Check type="checkbox" defaultChecked $white $bold aria-label="Archicad Classification" /></Lead></td>
                <td><Lead $l={2}>Archicad Classification - v 2.0</Lead></td><td><Lead $l={2}>Opening</Lead></td>
                <td><Flat $w={17} $h={17} aria-label="Choose"><Caret $right /></Flat></td>
              </Tr>
            </tbody>
          </Table>
        </ListClip>
        <ScrollBar $thumb={0}><Chevron dir="up" color="#bbb" /><div /><Chevron color="#bbb" /></ScrollBar>
      </ListWrap>
      <Splitter />
      <ListWrap $h={212}>
        <ListClip>
          <Table>
            <colgroup><col width="60" /><col width="154" /><col /><col width="20" /></colgroup>
            <tbody>
              {PROPS.map(([kind, label, value]) => (
                <Tr key={label} $head={kind === 'head'} $sel={kind === 'sel'}>
                  <td>
                    {kind === 'head' && <Lead $l={7}><Caret /></Lead>}
                    {kind === 'link' && <Lead $l={32}><Icon n="link" w={15} /></Lead>}
                  </td>
                  {kind === 'head' ? <th colSpan={3}>{label}</th> : (
                    <>
                      <td><Lead $l={2}>{label}</Lead></td>
                      <td colSpan={kind === 'sel' ? 1 : 2}>
                        {kind === 'sel' && <CellInput $w="100%" defaultValue={value} aria-label={label} />}
                        {kind === 'crane' && <Row $justify="space-between" $pad="0 20px 0 0">{value}<Icon n="crane" w={19} /></Row>}
                        {kind !== 'sel' && kind !== 'crane' && value}
                      </td>
                      {kind === 'sel' && <td />}
                    </>
                  )}
                </Tr>
              ))}
            </tbody>
          </Table>
        </ListClip>
        <ScrollBar $thumb={47}><Chevron dir="up" /><div /><Chevron /></ScrollBar>
      </ListWrap>
      <Line $m="12px 0" />
      <Row $justify="flex-end" $gap={12} $pad="0 1px 0 0">
        <DlgButton>Cancel</DlgButton>
        <DlgButton $primary>OK</DlgButton>
      </Row>
    </DialogBody>
    <Highlight />
    <SizeGrip>
      <svg width="9" height="9" viewBox="0 0 9 9" fill="#bbb"><path d="M6 0h2v2H6zM3 3h2v2H3zM6 3h2v2H6zM0 6h2v2H0zM3 6h2v2H3zM6 6h2v2H6z" /></svg>
    </SizeGrip>
  </Dialog>
)

/* ---------- 3D view ---------- */

const Scene = () => (
  <svg viewBox="43 158 1692 837" preserveAspectRatio="xMinYMin slice" fill="none">
    <defs>
      <linearGradient id="grass" x1="0" y1="0" x2=".3" y2="1">
        <stop offset="0" stopColor="#4b5a2d" /><stop offset=".5" stopColor="#425c29" /><stop offset="1" stopColor="#416127" />
      </linearGradient>
      <filter id="grain" x="0" y="0" width="100%" height="100%">
        <feTurbulence type="fractalNoise" baseFrequency=".45" numOctaves="3" seed="4" />
        <feColorMatrix values="0 0 0 0 .12  0 0 0 0 .16  0 0 0 0 .06  0 1.1 0 0 -.42" />
      </filter>
      <filter id="patches" x="0" y="0" width="100%" height="100%">
        <feTurbulence type="fractalNoise" baseFrequency=".01 .03" numOctaves="4" seed="9" />
        <feColorMatrix values="0 0 0 0 .36  0 0 0 0 .38  0 0 0 0 .2  0 1.6 0 0 -.6" />
      </filter>
      <clipPath id="land"><path d="M399 270 1400 539V860L55 759z" /></clipPath>
      <clipPath id="ground"><path d="M399 270 1400 539V923L76 817 55 759z" /></clipPath>
    </defs>
    <path d="M399 270 1400 539V865L55 759z" fill="url(#grass)" />
    <path d="M55 759 1400 865v60L76 817z" fill="#33261f" />
    <g clipPath="url(#land)"><rect x="43" y="250" width="1200" height="640" filter="url(#patches)" opacity=".45" /></g>
    <path d="M447 331 528 332 895 433 868 502 851 587 486 567 394 651 254 644z" fill="#2f4020" />
    <path d="M447 331 486 567 394 651 254 644z" fill="#364722" />
    <g clipPath="url(#ground)"><rect x="43" y="250" width="1200" height="700" filter="url(#grain)" /></g>
    <path d="M486 567 851 587 836 679 394 651z" fill="#fff" />
    <path d="M399 270 1400 539M55 759l1345 101M399 270 55 759l21 58 1324 108" stroke="#96902f" strokeWidth="1.200" />

    <g stroke="#1b8a1b" strokeWidth="1">
      <path d="M895 433v160L838 790 282 749 254 644M838 790l-2-111M282 749l112-98" />
    </g>
    <g stroke="#2b3d84" strokeWidth="2.200">
      <path d="M330 646 268 695l569 39 57-188-34-2M543 714l8 55M536 661l7 53" />
    </g>
    <g stroke="#0ab80a" strokeWidth="1.800">
      <path d="M198 438 447 331 895 343 831 464zM198 438l56 206L447 331l39 236-92 84M254 644l582 35-5-215M528 332l367 101-27 69-17 85-15 92M486 567l365 20M895 343v90" />
    </g>
    <g stroke="#0000e6" strokeWidth="2.800">
      <path d="m503 450 33 211M330 646l148-121 382 19" />
    </g>
    <g fill="#000">
      {[[447, 331], [895, 343], [831, 464], [198, 438], [503, 450], [478, 525], [486, 567]].map(([x, y]) => (
        <circle key={x} cx={x} cy={y} r="3.300" />
      ))}
    </g>
    <g fill="#1d3a1d">
      {[[268, 695], [543, 714], [551, 769], [837, 734], [838, 790], [282, 749], [894, 546]].map(([x, y]) => (
        <circle key={x} cx={x} cy={y} r="3" />
      ))}
    </g>
    <g stroke="#8b988b" strokeWidth="1.200">
      <path d="M887 605l59 4M890 608l56 4M947 560l-2 52-4 26M944 560l-2 52" />
      <path d="m946 547 6 6m0-6-6 6m-7 86 3 5 3-5M884 603l4 6m0-6-4 6" stroke="#ddd" />
    </g>
  </svg>
)

const TOOLS = ['wall', 'column', 'beam', 'slab', 'roof', 'shell', 'stair', 'railing', 'curtain', 'door', 'window',
  'skylight', 'opening', 'zone', 'mesh', 'morph', 'chair', 'lamp', 'object', 'cwall', 'panel']

const MENUS = ['File', 'Edit', 'View', 'Design', 'Document', 'Options', 'Teamwork', 'Window', 'Help']

const OPTIONS = [
  ['fit', 'N/A', 1], ['rotate', 'N/A', 1], ['scale', '1:100'], ['layers', 'A-00-All layers'],
  ['model', 'Entire Model'], ['pen', '00-Working'], ['override', '00-Working'],
]

// icon + drop-down arrow that belongs to it
const Split = ({ n, on, off }) => (
  <>
    <Tool $w={30} $on={on} aria-label={n}><Icon n={n} w={20} /></Tool>
    <Tool $w={16} $on={on} aria-label={`${n} options`}><Caret $c={off && '#777'} /></Tool>
  </>
)

const one = (n, on) => <Tool key={n} $on={on} aria-label={n}><Icon n={n} w={20} /></Tool>

const App = () => (
  <>
    <GlobalStyle />
    <Window>
      <Top>
        <div>
          <Title><Icon n="logo" w={13} />Untitled - Archicad 27</Title>
          <Menu>{MENUS.map(m => <button key={m}>{m}</button>)}</Menu>
        </div>
        <WinButtons>
          <WinRow $gap={35} $h={15} $pad={18}>
            <Svg width="10" height="10" viewBox="0 0 10 10" $color="#888"><path d="M0 5.500h10" strokeWidth="1" /></Svg>
            <Svg width="10" height="10" viewBox="0 0 10 10" $color="#888"><path d="M.5 2.500h7v7h-7zM2.500 2V.5h7v7H8" strokeWidth="1" /></Svg>
            <Svg width="11" height="11" viewBox="0 0 11 11" $color="#888"><path d="m.5.5 10 10m0-10-10 10" strokeWidth="1" /></Svg>
          </WinRow>
          <WinRow $gap={6} $h={30} $pad={3}>
            <Svg width="8" height="8" viewBox="0 0 8 8" $color="#aaa"><path d="M0 6.500h8" strokeWidth="2" /></Svg>
            <Svg width="8" height="8" viewBox="0 0 8 8" $color="#aaa"><path d="M1 3h4v4H1zM3 1h4v4" strokeWidth="1.500" /></Svg>
            <Svg width="8" height="8" viewBox="0 0 8 8" $color="#aaa"><path d="m1 1 6 6m0-6L1 7" strokeWidth="2" /></Svg>
          </WinRow>
        </WinButtons>
      </Top>

      <Toolbar>
        {one('undo')}
        <Tool aria-label="redo"><Icon n="redo" w={20} color="#b0b0b0" /></Tool>
        <Sep />
        {one('find')}{one('picker')}{one('syringe')}
        <Sep $m={3} />
        <Split n="setsquare" on /><Split n="snap" on /><Split n="tracker" on />
        <Split n="grid" />
        {one('planeH')}{one('planeV')}
        <Split n="trace" off /><Split n="stamp" off />
        {one('suspend', true)}{one('ruler')}{one('cross')}{one('groups', true)}
        <Split n="cutaway" /><Split n="explore" />
        <Sep $m={3} />
        {['scissors', 'axe', 'adjust', 'corner', 'arc', 'resize', 'house'].map(n => one(n))}
        <Sep $m={3} />
        {['flag', 'flagList', 'cloud'].map(n => one(n))}
        <Sep />
        {one('houseCheck')}
      </Toolbar>

      <InfoBox>
        <Cell>
          <CellLabel>Main:</CellLabel>
          <Row $gap={3} $align="flex-end" $pad="4px 0 0">
            <Stack>
              <CellLabel>All Selected: 1</CellLabel>
              <Row $gap={2} $pad="2px 0 0">
                <Flat $w={40} $h={18} aria-label="Selection"><Icon n="nodes" w={16} /><Caret $right /></Flat>
                <Flat $w={40} $h={18} aria-label="Marquee"><Icon n="marqueeArrow" w={17} /><Caret $right /></Flat>
                <Flat $w={40} $h={18} $on aria-label="Magnet"><Icon n="magnet" w={16} /></Flat>
              </Row>
            </Stack>
            <Flat $w={48} $h={28} aria-label="Opening tool"><Icon n="opening" w={18} /><Sep $m={0} $h={20} /><Caret /></Flat>
          </Row>
        </Cell>
        <Cell>
          <CellLabel>Orientation:</CellLabel>
          <Row $pad="8px 0 0"><Picks names={ORIENTATIONS} /></Row>
        </Cell>
        <Cell>
          <CellLabel>Shape:</CellLabel>
          <Row $pad="8px 0 0"><Picks names={SHAPES} size={18} /></Row>
        </Cell>
        <Cell>
          <CellLabel>Dimensions:</CellLabel>
          <Row $gap={3} $pad="3px 0 0 3px">
            <Icon n="dims" w={37} h={36} box="0 0 35 36" />
            <Stack $gap={2}>
              <Field $w={110} defaultValue="8977" aria-label="Dimension a" />
              <Field $w={110} defaultValue="7171" aria-label="Dimension b" />
            </Stack>
            <Flat $w={20} $h={38} aria-label="Chain"><Icon n="chain" w={12} h={30} box="0 0 12 34" /></Flat>
          </Row>
        </Cell>
        <Cell>
          <CellLabel>Anchor Height:</CellLabel>
          <Row $gap={4} $pad="4px 0 0 7px">
            <Icon n="anchorH" w={33} h={32} box="0 0 33 32" />
            <Stack $gap={3} $align="flex-end">
              <span>to 0. GF-Ground Floor</span>
              <Field $w={132} disabled defaultValue="by Elevation" aria-label="Anchor height" />
            </Stack>
          </Row>
        </Cell>
        <Cell>
          <CellLabel>Anchor Point:</CellLabel>
          <Row $justify="flex-end" $pad="3px 0 0"><AnchorPins /></Row>
        </Cell>
        <Cell>
          <CellLabel>Floor Plan And Section:</CellLabel>
          <Row $pad="8px 0 0"><Flat $w={176} $h={28} $start><Icon n="frame" w={19} />Floor Plan and Section...</Flat></Row>
        </Cell>
        <Cell />
        <Cell />
        <Cell>
          <CellLabel>Surface:</CellLabel>
          <Row $gap={4} $pad="8px 0 0"><Flat $w={43} $h={28} $gap={9} aria-label="Surface"><Icon n="stamp" w={14} /><Caret /></Flat>By Cut Elements</Row>
        </Cell>
        <Cell>
          <CellLabel>Classification:</CellLabel>
          <Row $gap={5} $pad="14px 0 0 2px"><Icon n="class" w={16} />Opening</Row>
        </Cell>
      </InfoBox>

      <Body>
        <Tools>
          <Grip $w={19} />
          <Tool $w={42} $h={27} $on aria-label="Arrow"><Icon n="arrow" w={18} /></Tool>
          <Tool $w={39} $h={36} aria-label="Marquee"><Icon n="marquee" w={20} /></Tool>
          <ToolHead>Design</ToolHead>
          {TOOLS.map(n => <Tool key={n} $w={39} $h={30} aria-label={n}><Icon n={n} w={22} h={20} /></Tool>)}
          <Row $pad="5px 0 0" />
          <ToolHead>Viewpoi</ToolHead>
          <ToolHead>Docume</ToolHead>
        </Tools>

        <Centre>
          <Tabs>
            <Tool $w={25} $h={23} aria-label="Tab overview"><Icon n="tabs" w={19} h={18} /></Tool>
            <Tab><Icon n="story" />[0. GF-Ground Floor]</Tab>
            <Tab><Icon n="lighthouse" />[Action Center]</Tab>
            <Tab $on>
              <Icon n="persp" /><span>[3D / All]</span>
              <Svg width="15" height="7" viewBox="-4 0 15 7" $color="#111"><path d="m0 0 7 7m0-7L0 7" strokeWidth="1.600" /></Svg>
            </Tab>
            <Grow />
            <Tool $w={24} $h={23} aria-label="3D options"><Icon n="houseTree" w={22} h={18} box="0 1 24 19" /></Tool>
            <Tool $w={18} $h={23} aria-label="More"><Caret /></Tool>
          </Tabs>
          <Canvas>
            <Scene />
            <Handle $at="top: 1px; left: 830px;"><HandleMark /></Handle>
            <Handle $at="bottom: 1px; left: 830px;"><HandleMark /></Handle>
            <Handle $v $at="top: 402px; left: 1px;"><HandleMark v /></Handle>
            <Handle $v $at="top: 402px; right: 1px;"><HandleMark v /></Handle>
          </Canvas>
          <Quick>
            <Tool $w={23} $h={19} aria-label="Back"><Icon n="back" w={17} /></Tool>
            <Tool $w={23} $h={19} aria-label="Forward"><Icon n="forward" w={17} color="#b0b0b0" /></Tool>
            <Tool $w={23} $h={19} aria-label="Zoom in"><Icon n="zoomIn" w={17} /></Tool>
            <Sep $h={19} $m={2} />
            <Tool $w={24} $h={19} aria-label="Orbit"><Icon n="orbit" w={16} /></Tool>
            <Tool $w={24} $h={19} aria-label="Walk"><Icon n="walk" w={15} /></Tool>
            {OPTIONS.map(([n, text, off]) => (
              <Option key={n + text} $off={off}>
                <Icon n={n} w={17} color={off && n !== 'fit' ? '#b0b0b0' : undefined} /><span>{text}</span><Caret $right $c={off && '#999'} />
              </Option>
            ))}
            <Option aria-label="Renovation filter"><Icon n="override" w={17} /></Option>
            <Grow />
            <Option $end><span>Shading</span><Caret $right /></Option>
          </Quick>
        </Centre>

        <Navigator>
          <Grip $w={61} />
          <Row $pad="0 2px 0 2px">
            <Tool $w={30} $h={29} $on aria-label="Project map"><Icon n="project" w={19} /></Tool>
            <Sep $m={5} $h={20} />
            {['viewmap', 'layout', 'publisher'].map(n => <Tool key={n} $w={30} $h={29} aria-label={n}><Icon n={n} w={19} /></Tool>)}
            <Grow />
            <Flat $w={32} $h={21} aria-label="Navigator menu">
              <Svg width="13" height="10" viewBox="0 0 13 10"><path d="M0 1h13M0 5h13M0 9h13" /></Svg><Caret $right />
            </Flat>
          </Row>
          <Search><Icon n="search" w={15} color="#555" /><input placeholder="Search Project Map" aria-label="Search Project Map" /></Search>
          <TreeWrap>
            <Tree>
              {NODES.map(([depth, icon, text, open, on], i) => (
                <Node key={i} $depth={depth} $on={on}>
                  <i>{open ? <Chevron /> : null}</i>
                  <Icon n={icon} />
                  <span>{text}</span>
                </Node>
              ))}
            </Tree>
            <ScrollBar $thumb={367}><Chevron dir="up" /><div /><Chevron /></ScrollBar>
          </TreeWrap>
          <HScroll><Chevron dir="left" /><div /><Chevron dir="right" /></HScroll>
          <Row $gap={15} $pad="10px 0 10px 11px">
            <Icon n="plus" w={15} /><Icon n="settings" w={15} /><Icon n="del" w={15} />
          </Row>
          <NavHead><Caret />Properties</NavHead>
          <Row $justify="space-between" $pad="6px 16px 4px 6px"><Icon n="persp" w={12} />Generic Perspective</Row>
          <Row $pad="0 2px 3px 3px"><WideButton>Settings...</WideButton></Row>
        </Navigator>
      </Body>

      <Status>
        <Icon n="windows" w={16} />
        <Brand>GRAPHISOFT <span>ID</span></Brand>
      </Status>

      <SettingsDialog />
    </Window>
  </>
)

export default App
